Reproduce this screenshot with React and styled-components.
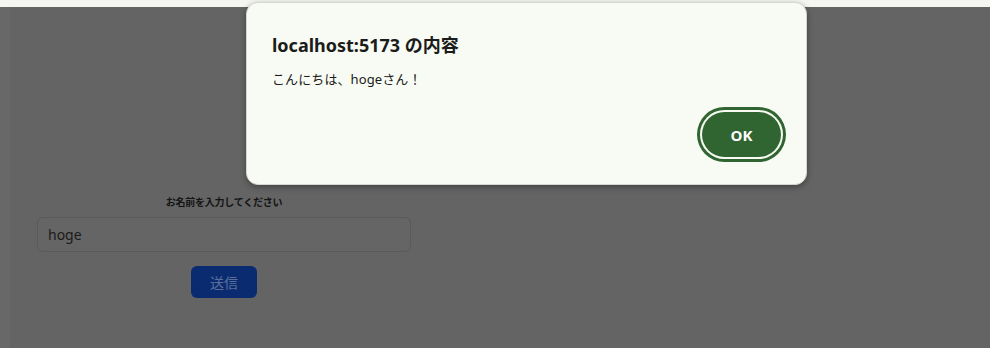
import React, { useState } from 'react';
import styled, { createGlobalStyle } from 'styled-components';

const GlobalStyle = createGlobalStyle`
    html, body {
        margin: 0;
        padding: 0;
        height: 100%;
        background: #686868;
        font-family: "Noto Sans", "Noto Sans CJK JP", sans-serif;
    }
    #root {
        height: 100%;
    }
`;

const Screen = styled.div`
    position: relative;
    display: flex;
    flex-direction: column;
    height: 348px;
    overflow: hidden;
`;

const TopStrip = styled.div`
    height: 7px;
    background: #f5f6f1;
    flex-shrink: 0;
`;

const Page = styled.main`
    flex: 1;
    margin-left: 10px;
    background: #646464;
    padding: 187px 0 0 27px;
`;

const Form = styled.form`
    width: 374px;
    display: flex;
    flex-direction: column;
    align-items: center;
`;

const Label = styled.label`
    font-family: "Noto Sans CJK JP", sans-serif;
    font-size: 10px;
    letter-spacing: -0.25px;
    font-weight: 700;
    color: #141414;
    line-height: 16px;
    margin-bottom: 7px;
`;

const Input = styled.input`
    box-sizing: border-box;
    width: 100%;
    height: 35px;
    padding: 0 10px;
    border: 1px solid #5a5a5a;
    border-radius: 6px;
    background: #656565;
    color: #1a1a1a;
    font-family: "Noto Sans", "Noto Sans CJK JP", sans-serif;
    font-size: 14px;
    outline: none;
`;

const SubmitButton = styled.button`
    margin-top: 14px;
    width: 66px;
    height: 32px;
    border: none;
    border-radius: 6px;
    background: #0b2b70;
    color: #5b6f9c;
    font-family: "Noto Sans CJK JP", sans-serif;
    font-size: 14px;
    cursor: pointer;
`;

const Dialog = styled.div`
    position: absolute;
    left: 246px;
    top: 2px;
    width: 561px;
    height: 183px;
    box-sizing: border-box;
    background: #f8fbf3;
    border: 1px solid #d4d6d0;
    border-radius: 12px;
    box-shadow: 0 2px 6px rgba(0, 0, 0, 0.35);
    padding: 28px 25px 0 25px;
    display: flex;
    flex-direction: column;
`;

const DialogTitle = styled.h2`
    margin: 0;
    font-family: "Noto Sans", "Noto Sans CJK JP", sans-serif;
    font-size: 18px;
    font-weight: 700;
    line-height: 28px;
    color: #1b1c1a;
`;

const DialogMessage = styled.p`
    margin: 10px 0 0;
    font-family: "Noto Sans", "Noto Sans CJK JP", sans-serif;
    font-size: 13px;
    letter-spacing: 0.1px;
    line-height: 20px;
    color: #1b1c1a;
`;

const DialogActions = styled.div`
    display: flex;
    justify-content: flex-end;
    margin-top: 23px;
`;

const OkButton = styled.button`
    width: 79px;
    height: 45px;
    border: none;
    border-radius: 999px;
    background: #306531;
    color: #ffffff;
    font-family: "Open Sans", "Noto Sans", sans-serif;
    font-size: 15px;
    font-weight: 700;
    box-shadow: 0 0 0 2px #f8fbf3, 0 0 0 5px #306531;
    cursor: pointer;
`;

function App() {
    const [name, setName] = useState('hoge');

    return (
        <Screen>
            <GlobalStyle />
            <TopStrip />
            <Page>
                <Form onSubmit={(event) => event.preventDefault()}>
                    <Label htmlFor="name">お名前を入力してください</Label>
                    <Input
                        id="name"
                        type="text"
                        value={name}
                        onChange={(event) => setName(event.target.value)}
                    />
                    <SubmitButton type="submit">送信</SubmitButton>
                </Form>
            </Page>
            <Dialog role="alertdialog">
                <DialogTitle>localhost:5173 の内容</DialogTitle>
                <DialogMessage>こんにちは、{name}さん！</DialogMessage>
                <DialogActions>
                    <OkButton>OK</OkButton>
                </DialogActions>
            </Dialog>
        </Screen>
    );
}

export default App;
